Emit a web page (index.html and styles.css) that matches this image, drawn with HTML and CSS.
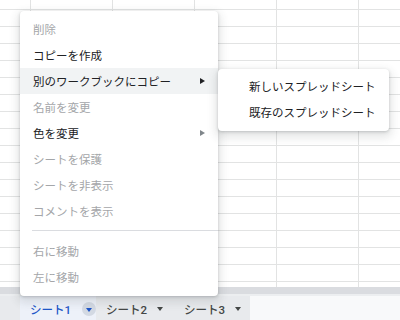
FILE: index.html
```html
<!DOCTYPE html>
<html lang="ja">
<head>
<meta charset="utf-8">
<title>Sheets</title>
<link rel="stylesheet" href="styles.css">
</head>
<body>
<div class="app">
  <div class="grid"></div>
  <div class="hscroll"></div>
  <div class="bottombar">
    <div class="tabs">
      <div class="tab active"><span class="tab-label">シート1</span><span class="tab-drop"><span class="caret"></span></span></div>
      <div class="tab"><span class="tab-label">シート2</span><span class="caret"></span></div>
      <div class="tab"><span class="tab-label">シート3</span><span class="caret"></span></div>
    </div>
    <div class="bar-rest"></div>
  </div>

  <div class="menu main-menu">
    <div class="item disabled">削除</div>
    <div class="item">コピーを作成</div>
    <div class="item hover">別のワークブックにコピー<span class="arrow"></span></div>
    <div class="item disabled">名前を変更</div>
    <div class="item">色を変更<span class="arrow grey"></span></div>
    <div class="item disabled">シートを保護</div>
    <div class="item disabled">シートを非表示</div>
    <div class="item disabled">コメントを表示</div>
    <div class="sep"></div>
    <div class="item disabled">右に移動</div>
    <div class="item disabled">左に移動</div>
  </div>

  <div class="menu sub-menu">
    <div class="item">新しいスプレッドシート</div>
    <div class="item">既存のスプレッドシート</div>
  </div>
</div>
</body>
</html>
```
FILE: styles.css
```css
html, body {
  margin: 0;
  padding: 0;
}
body {
  width: 400px;
  height: 320px;
  overflow: hidden;
  background: #fff;
  font-family: Roboto, "Noto Sans CJK JP", sans-serif;
}
.app {
  position: relative;
  width: 400px;
  height: 320px;
  display: flex;
  flex-direction: column;
}
.grid {
  flex: none;
  height: 287px;
  background-color: #fff;
  background-image:
    linear-gradient(to bottom, transparent 16px, #e2e3e3 16px),
    linear-gradient(to right, transparent 81px, #e2e3e3 81px);
  background-size: 100% 17px, 82px 100%;
  background-position: 0 -7px, 31px 0;
}
.hscroll {
  flex: none;
  height: 7px;
  background: #dadce0;
  border-bottom: 2px solid #eceef0;
}
.bottombar {
  flex: 1;
  display: flex;
}
.tabs {
  flex: none;
  width: 250px;
  box-sizing: border-box;
  padding-left: 20px;
  background: #e8eaed;
  display: flex;
}
.bar-rest {
  flex: 1;
  background: #f8f9fa;
}
.tab {
  flex: none;
  display: flex;
  align-items: center;
  gap: 10px;
  padding: 2px 11px 0 10px;
  font-size: 11.5px;
  font-weight: 500;
  color: #444746;
  white-space: nowrap;
}
.tab.active {
  background: #edf1f9;
  color: #1f57c8;
  gap: 11px;
  padding-right: 0;
}
.caret {
  flex: none;
  width: 0;
  height: 0;
  border-top: 4px solid #444746;
  border-left: 3.5px solid transparent;
  border-right: 3.5px solid transparent;
}
.tab-drop {
  flex: none;
  width: 14px;
  height: 14px;
  border-radius: 50%;
  background: #d3d9e3;
  display: flex;
  align-items: center;
  justify-content: center;
}
.tab-drop .caret {
  border-top-color: #1f57c8;
  margin-top: 1px;
}

.menu {
  position: absolute;
  background: #fff;
  border-radius: 4px;
  box-shadow: 0 1px 3px rgba(60, 64, 67, 0.25), 0 4px 8px 3px rgba(60, 64, 67, 0.12);
}
.main-menu {
  left: 20px;
  top: 11px;
  width: 198px;
  padding: 5px 0 6px;
}
.sub-menu {
  left: 218px;
  top: 69px;
  width: 171px;
  padding: 4px 0 6px;
}
.item {
  height: 26px;
  display: flex;
  align-items: center;
  padding-left: 13px;
  font-size: 11.5px;
  color: #202124;
  white-space: nowrap;
}
.sub-menu .item {
  padding-left: 31px;
}
.item.disabled {
  color: #a4a6a9;
}
.item.hover {
  background: #f1f3f4;
}
.arrow {
  margin-left: auto;
  margin-right: 13px;
  width: 0;
  height: 0;
  border-left: 5px solid #202124;
  border-top: 3.5px solid transparent;
  border-bottom: 3.5px solid transparent;
}
.arrow.grey {
  border-left-color: #80868b;
}
.sep {
  height: 1px;
  background: #dadce0;
  margin: 6px 0 7px 12px;
}
```
